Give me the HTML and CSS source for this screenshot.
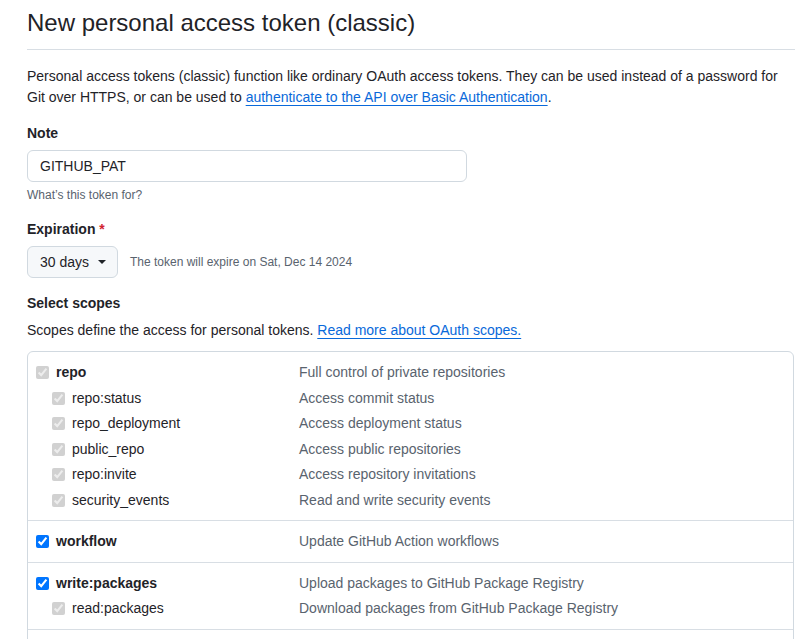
FILE: index.html
```html
<!DOCTYPE html>
<html lang="en">
<head>
<meta charset="utf-8">
<title>New personal access token (classic)</title>
<link rel="stylesheet" href="styles.css">
</head>
<body>
<main class="page">
  <div class="subhead">
    <h1 class="subhead-title">New personal access token (classic)</h1>
  </div>
  <p class="intro">Personal access tokens (classic) function like ordinary OAuth access tokens. They can be used instead of a password for Git over HTTPS, or can be used to <a href="#" class="link">authenticate to the API over Basic Authentication</a>.</p>

  <label class="form-label label-note">Note</label>
  <input class="form-input" type="text" value="GITHUB_PAT">
  <div class="hint">What’s this token for?</div>

  <label class="form-label label-exp">Expiration <span class="req">*</span></label>
  <div class="exp-row">
    <button class="select-btn" type="button">30 days <span class="caret"></span></button>
    <span class="exp-note">The token will expire on Sat, Dec 14 2024</span>
  </div>

  <div class="form-label label-scopes">Select scopes</div>
  <p class="scopes-desc">Scopes define the access for personal tokens. <a href="#" class="link">Read more about OAuth scopes.</a></p>

  <div class="scope-box">
    <div class="scope-group">
      <div class="scope-row">
        <label class="scope-name top"><input type="checkbox" checked disabled><span>repo</span></label>
        <span class="scope-desc">Full control of private repositories</span>
      </div>
      <div class="scope-row">
        <label class="scope-name sub"><input type="checkbox" checked disabled><span>repo:status</span></label>
        <span class="scope-desc">Access commit status</span>
      </div>
      <div class="scope-row">
        <label class="scope-name sub"><input type="checkbox" checked disabled><span>repo_deployment</span></label>
        <span class="scope-desc">Access deployment status</span>
      </div>
      <div class="scope-row">
        <label class="scope-name sub"><input type="checkbox" checked disabled><span>public_repo</span></label>
        <span class="scope-desc">Access public repositories</span>
      </div>
      <div class="scope-row">
        <label class="scope-name sub"><input type="checkbox" checked disabled><span>repo:invite</span></label>
        <span class="scope-desc">Access repository invitations</span>
      </div>
      <div class="scope-row">
        <label class="scope-name sub"><input type="checkbox" checked disabled><span>security_events</span></label>
        <span class="scope-desc">Read and write security events</span>
      </div>
    </div>
    <div class="scope-group">
      <div class="scope-row">
        <label class="scope-name top"><input type="checkbox" checked><span>workflow</span></label>
        <span class="scope-desc">Update GitHub Action workflows</span>
      </div>
    </div>
    <div class="scope-group">
      <div class="scope-row">
        <label class="scope-name top"><input type="checkbox" checked><span>write:packages</span></label>
        <span class="scope-desc">Upload packages to GitHub Package Registry</span>
      </div>
      <div class="scope-row">
        <label class="scope-name sub"><input type="checkbox" checked disabled><span>read:packages</span></label>
        <span class="scope-desc">Download packages from GitHub Package Registry</span>
      </div>
    </div>
    <div class="scope-group">
      <div class="scope-row">
        <label class="scope-name top"><input type="checkbox"><span>delete:packages</span></label>
        <span class="scope-desc">Delete packages from GitHub Package Registry</span>
      </div>
    </div>
  </div>
</main>
</body>
</html>
```

FILE: styles.css
```css
* { box-sizing: border-box; }

html, body {
  margin: 0;
  padding: 0;
  background: #ffffff;
}

body {
  font-family: "Liberation Sans", Arial, sans-serif;
  font-size: 14px;
  line-height: 21px;
  color: #1f2328;
}

.page {
  display: flex;
  flex-direction: column;
  align-items: flex-start;
  width: 768px;
  margin-left: 27px;
  padding-top: 5px;
}

.subhead {
  align-self: stretch;
  padding-bottom: 8px;
  border-bottom: 1px solid #d8dee4;
  margin-bottom: 16px;
}

.subhead-title {
  margin: 0;
  font-size: 24px;
  line-height: 36px;
  font-weight: 400;
  color: #1f2328;
}

.intro {
  margin: 0 0 15px 0;
}

.link {
  color: #0969da;
  text-decoration: underline;
  text-underline-offset: 3px;
}

.form-label {
  display: block;
  font-weight: 700;
  font-size: 14px;
  line-height: 21px;
}

.label-note { margin-bottom: 6px; }

.form-input {
  width: 440px;
  height: 32px;
  padding: 0 12px;
  border: 1px solid #d1d9e0;
  border-radius: 6px;
  font-family: "Liberation Sans", Arial, sans-serif;
  font-size: 14px;
  color: #1f2328;
  background: #ffffff;
  outline: none;
}

.hint {
  margin-top: 4px;
  font-size: 12px;
  line-height: 18px;
  color: #59636e;
}

.label-exp {
  margin-top: 15px;
  margin-bottom: 6px;
}

.req { color: #d1242f; }

.exp-row {
  display: flex;
  align-items: center;
  gap: 12px;
}

.select-btn {
  display: flex;
  align-items: center;
  white-space: nowrap;
  height: 32px;
  width: 91px;
  padding: 0 0 0 12px;
  border: 1px solid #d1d9e0;
  border-radius: 6px;
  background: #f6f8fa;
  font-family: "Liberation Sans", Arial, sans-serif;
  font-size: 14px;
  color: #1f2328;
}

.caret {
  display: inline-block;
  flex: none;
  width: 0;
  height: 0;
  margin-left: 9px;
  border-top: 4px solid #1f2328;
  border-left: 4px solid transparent;
  border-right: 4px solid transparent;
}

.exp-note {
  font-size: 12px;
  color: #59636e;
}

.label-scopes { margin-top: 15px; }

.scopes-desc {
  margin: 6px 0 10px 0;
}

.scope-box {
  align-self: stretch;
  border: 1px solid #d1d9e0;
  border-radius: 6px;
  margin-right: 1px;
}

.scope-group {
  padding: 8px 0 7px 0;
  border-bottom: 1px solid #d8dee4;
}

.scope-group:last-child { border-bottom: none; }

.scope-row {
  display: flex;
  align-items: center;
  height: 25.5px;
}

.scope-name {
  display: flex;
  align-items: center;
  gap: 7px;
  width: 271px;
  padding-left: 8px;
  color: #1f2328;
}

.scope-name.sub { padding-left: 24px; }

.scope-name.top span { font-weight: 700; }

.scope-name input {
  margin: 0;
  width: 13px;
  height: 13px;
}

.scope-desc {
  color: #59636e;
}
```
